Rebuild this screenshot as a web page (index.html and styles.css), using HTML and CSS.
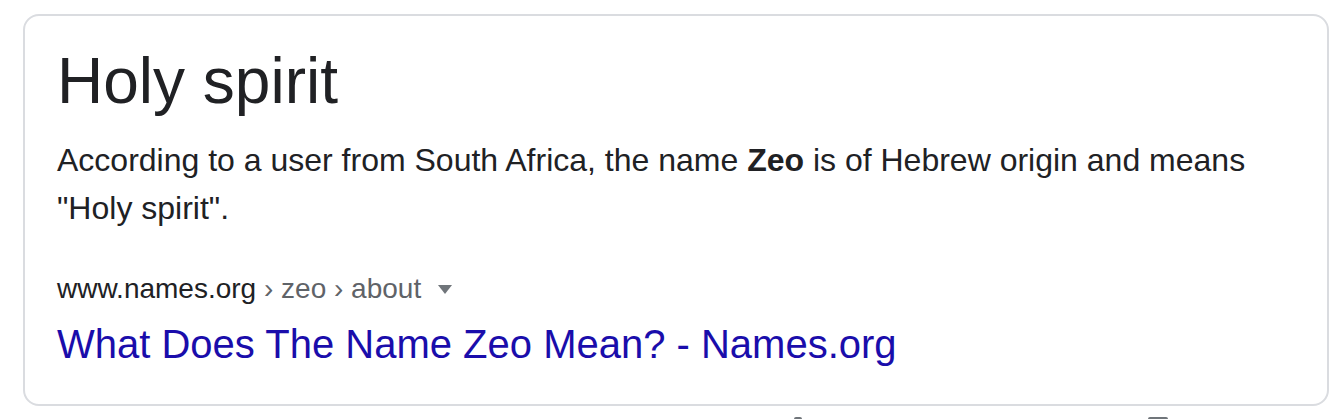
FILE: index.html
```html
<!DOCTYPE html>
<html>
<head>
<meta charset="utf-8">
<link rel="stylesheet" href="styles.css">
</head>
<body>
<div class="card">
  <div class="title">Holy spirit</div>
  <div class="desc"><span>According to a user from South Africa, the name </span><b>Zeo</b><span> is of Hebrew origin and means</span> <span>"Holy spirit".</span></div>
  <div class="cite">
    <span class="domain">www.names.org</span><span class="path"> › zeo › about</span>
    <span class="caret"></span>
  </div>
  <a class="link" href="#">What Does The Name Zeo Mean? - Names.org</a>
</div>
<div class="below">
  <span class="mark mark-round"></span>
  <span class="mark mark-square"></span>
</div>
</body>
</html>
```
FILE: styles.css
```css
html, body {
  margin: 0;
  padding: 0;
  background: #ffffff;
}
body {
  font-family: "Liberation Sans", Arial, sans-serif;
  color: #202124;
  width: 1340px;
  height: 420px;
  overflow: hidden;
}
.card {
  margin: 14px 0 0 23px;
  width: 1306px;
  box-sizing: border-box;
  border: 2px solid #dadce0;
  border-radius: 16px;
  padding: 29px 32px 36px 32px;
}
.title {
  font-size: 64px;
  line-height: 72px;
  color: #202124;
}
.desc {
  margin-top: 19px;
  font-size: 32px;
  line-height: 48px;
  color: #202124;
}
.desc b {
  font-weight: bold;
}
.cite {
  margin-top: 41px;
  font-size: 28px;
  line-height: 32px;
  display: flex;
  align-items: center;
  white-space: pre;
}
.domain {
  color: #202124;
}
.path {
  color: #5f6368;
}
.caret {
  margin-left: 17px;
  width: 0;
  height: 0;
  border-left: 7px solid transparent;
  border-right: 7px solid transparent;
  border-top: 9px solid #70757a;
}
.link {
  display: block;
  margin-top: 15px;
  font-size: 40px;
  line-height: 48px;
  color: #1a0dab;
  text-decoration: none;
}
.below {
  display: flex;
  height: 13px;
  align-items: flex-end;
}
.mark {
  display: block;
  background: #70757a;
}
.mark-round {
  margin-left: 794px;
  width: 8px;
  height: 2px;
  border-radius: 4px 4px 0 0;
}
.mark-square {
  margin-left: 346px;
  width: 20px;
  height: 2px;
  border-radius: 2px 2px 0 0;
}
```
